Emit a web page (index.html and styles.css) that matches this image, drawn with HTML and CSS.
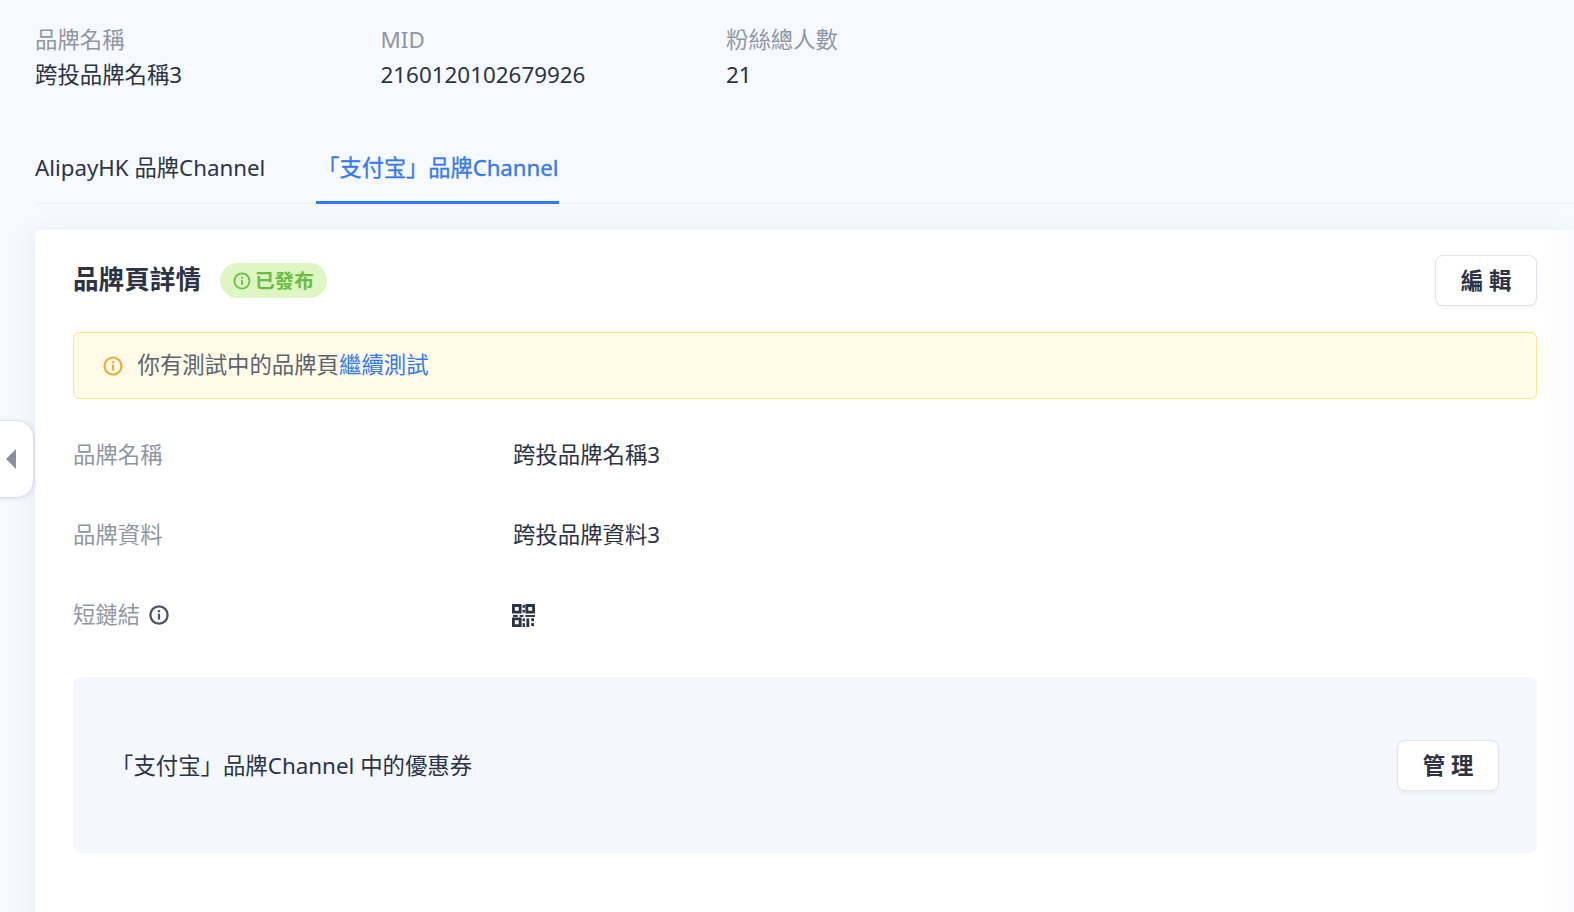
FILE: index.html
```html
<!DOCTYPE html>
<html lang="zh-Hant">
<head>
<meta charset="utf-8">
<title>品牌頁詳情</title>
<link rel="stylesheet" href="styles.css">
</head>
<body>
<main class="page">
  <section class="info">
    <div class="info-item"><div class="info-label">品牌名稱</div><div class="info-value">跨投品牌名稱3</div></div>
    <div class="info-item"><div class="info-label">MID</div><div class="info-value">2160120102679926</div></div>
    <div class="info-item"><div class="info-label">粉絲總人數</div><div class="info-value">21</div></div>
  </section>
  <nav class="tabs">
    <div class="tab">AlipayHK 品牌Channel</div>
    <div class="tab tab-active">「支付宝」品牌Channel</div>
  </nav>
  <section class="card">
    <header class="card-head">
      <div class="card-title-wrap">
        <h1 class="card-title">品牌頁詳情</h1>
        <span class="badge">
          <svg class="badge-icon" viewBox="0 0 16 16"><circle cx="8" cy="8" r="6.7" fill="none" stroke="currentColor" stroke-width="1.6"/><rect x="7.200" y="7" width="1.6" height="4.600" fill="currentColor"/><rect x="7.200" y="4.300" width="1.6" height="1.600" fill="currentColor"/></svg>
          <span class="badge-text">已發布</span>
        </span>
      </div>
      <button class="btn">編 輯</button>
    </header>
    <div class="alert">
      <svg class="alert-icon" viewBox="0 0 20 20"><circle cx="10" cy="10" r="8.500" fill="none" stroke="currentColor" stroke-width="2.200"/><rect x="8.900" y="8.600" width="2.200" height="6" fill="currentColor"/><rect x="8.900" y="5.200" width="2.200" height="2.100" fill="currentColor"/></svg>
      <span class="alert-text">你有測試中的品牌頁<a class="link">繼續測試</a></span>
    </div>
    <div class="row"><div class="row-label">品牌名稱</div><div class="row-value">跨投品牌名稱3</div></div>
    <div class="row"><div class="row-label">品牌資料</div><div class="row-value">跨投品牌資料3</div></div>
    <div class="row">
      <div class="row-label">短鏈結
        <svg class="help-icon" viewBox="0 0 20 20"><circle cx="10" cy="10" r="8.600" fill="none" stroke="currentColor" stroke-width="2.300"/><rect x="8.900" y="8.600" width="2.200" height="6" fill="currentColor"/><rect x="8.900" y="5" width="2.200" height="2.200" fill="currentColor"/></svg>
      </div>
      <div class="row-value">
        <svg class="qr-icon" viewBox="0 0 24 24" fill="#2b3345">
          <path fill-rule="evenodd" d="M0 0h10v10H0zM3 3v4h4V3zM14 0h10v10H14zM17 3v4h4V3zM0 14h10v10H0zM3 17v4h4v-4z"/>
          <rect x="11" y="1" width="2.500" height="3"/><rect x="11" y="6" width="2.500" height="3"/>
          <rect x="14" y="11.500" width="10" height="2"/><rect x="1" y="11.500" width="5" height="2"/><rect x="8" y="11.500" width="4" height="2"/>
          <rect x="11" y="15" width="2.500" height="3"/><rect x="11" y="20" width="2.500" height="4"/>
          <rect x="15" y="15" width="3" height="9"/><rect x="20" y="15" width="3" height="3"/><rect x="20" y="20" width="3" height="3"/>
        </svg>
      </div>
    </div>
    <div class="panel">
      <div class="panel-text">「支付宝」品牌Channel 中的優惠券</div>
      <button class="btn">管 理</button>
    </div>
  </section>
</main>
<div class="collapse"><span class="collapse-arrow"></span></div>
</body>
</html>
```
FILE: styles.css
```css
* { box-sizing: border-box; }
html, body { margin: 0; height: 912px; overflow: hidden; }
body {
  background: #f6f9fe;
  color: #2b3345;
  font-family: "Noto Sans", "Noto Sans CJK TC", sans-serif;
  font-size: 22.4px;
}
.page { padding: 22px 0 0 35px; }
.info { display: grid; grid-template-columns: repeat(3, 345.5px); }
.info-label, .info-value { line-height: 35px; }
.info-label { color: #8f96a3; }
.tabs {
  display: flex;
  gap: 51px;
  margin-top: 40px;
  height: 72px;
  border-bottom: 1px solid #eceef3;
}
.tab {
  height: 72px;
  font-size: 22.3px;
  line-height: 71px;
  white-space: nowrap;
}
.tab-active {
  padding: 0 1px;
  color: #3478f6;
  font-size: 22.2px;
  -webkit-text-stroke: .3px #3478f6;
  border-bottom: 3px solid #3478f6;
}
.card {
  margin-top: 26px;
  height: 700px;
  padding: 25px 37px 0 38px;
  background: linear-gradient(90deg, #fff 98%, #fbfbfd 100%);
  border-radius: 6px 0 0 0;
  box-shadow: -6px 0 20px rgba(120, 135, 190, .08);
}
.card-head { display: flex; justify-content: space-between; align-items: center; }
.card-title-wrap { display: flex; align-items: center; gap: 19px; }
.card-title { margin: 0; padding-bottom: 1px; font-size: 25.6px; font-weight: 700; line-height: 36px; }
.badge {
  display: inline-flex;
  align-items: center;
  gap: 4px;
  height: 35px;
  padding: 0 13px;
  border-radius: 18px;
  background: #def5c4;
  color: #6bbd3e;
  font-size: 19.6px;
  font-weight: 700;
}
.badge-text { padding-bottom: 2px; }
.badge-icon { width: 18px; height: 18px; }
.btn {
  width: 102px;
  height: 51px;
  padding: 0 0 2px;
  background: #fff;
  border: 1.5px solid #e1e2ec;
  border-radius: 8px;
  box-shadow: 0 2px 4px rgba(60, 70, 110, .06);
  color: #2b3345;
  font-family: inherit;
  font-size: 22.4px;
  font-weight: 700;
}
.alert {
  display: flex;
  align-items: center;
  gap: 14.5px;
  height: 67px;
  margin-top: 26px;
  padding-left: 29px;
  background: #fffbe6;
  border: 1.5px solid #fde592;
  border-radius: 6px;
  color: #5c6370;
}
.alert-text { padding-bottom: 4px; }
.alert-icon { width: 20px; height: 20px; color: #f5a83a; }
.link { color: #3478f6; }
.row { display: flex; align-items: center; height: 80px; }
.alert + .row { margin-top: 16px; }
.row-label, .row-value { padding-bottom: 4px; }
.row-label { display: flex; align-items: center; gap: 9px; width: 440px; color: #8f96a3; }
.help-icon { width: 20px; height: 20px; margin-top: 4px; color: #4d5564; }
.qr-icon { display: block; width: 23px; height: 23px; margin: 4px 0 0 -1px; }
.panel {
  display: flex;
  justify-content: space-between;
  align-items: center;
  height: 176px;
  margin-top: 22px;
  padding: 0 38px 0 38px;
  background: #f4f7fc;
  border-radius: 8px;
}
.panel-text { padding-bottom: 2px; }
.collapse {
  position: absolute;
  left: -2px;
  top: 420px;
  width: 36px;
  height: 78px;
  display: flex;
  align-items: center;
  padding-left: 7px;
  background: #fff;
  border: 1px solid #dfe1ea;
  border-radius: 0 18px 18px 0;
  box-shadow: 1px 1px 4px rgba(80, 90, 130, .15);
}
.collapse-arrow {
  width: 0;
  height: 0;
  border-style: solid;
  border-width: 10px 10px 10px 0;
  border-color: transparent #8b919c transparent transparent;
}
```
